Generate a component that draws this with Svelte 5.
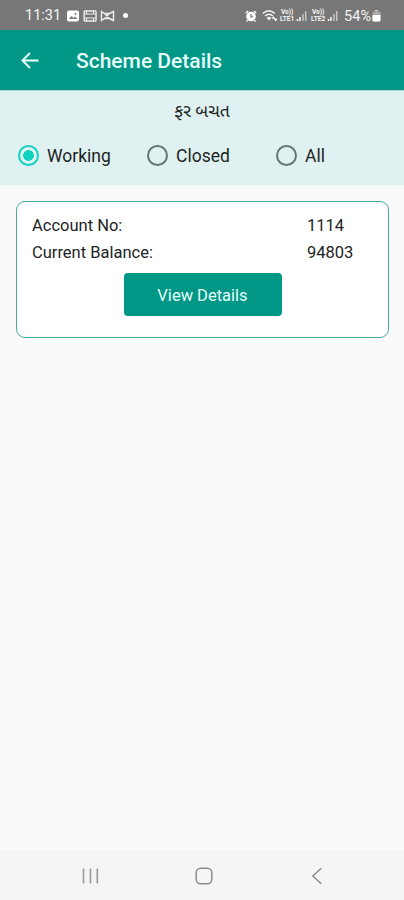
<script lang="ts">
	let filter = $state('working');

	const filters = [
		{ value: 'working', label: 'Working' },
		{ value: 'closed', label: 'Closed' },
		{ value: 'all', label: 'All' }
	];

	const account = { number: '1114', balance: '94803' };
	const sims = [
		{ top: 'Vo))', bottom: 'LTE1' },
		{ top: 'Vo))', bottom: 'LTE2' }
	];
</script>

<div class="screen">
	<div class="status-bar">
		<span class="clock">11:31</span>
		<svg class="notif" width="49" height="12" viewBox="0 0 49 12">
			<rect x="0" y="0.5" width="12" height="11" rx="2" fill="#fff" />
			<path d="M2 9l2.500-3 2 2 1.500-1.500L10.500 9z" fill="#777" />
			<circle cx="8.500" cy="3.700" r="1" fill="#777" />
			<rect x="17.100" y="1" width="12" height="10" rx="1" fill="none" stroke="#eee" stroke-width="1.400" />
			<path d="M19.500 1v3M26.500 1v3M19.500 8v3M26.500 8v3M17.500 4h11.500M17.500 8h11.500" stroke="#eee" fill="none" />
			<path d="M34.500 1.500l3 2h5l4-2v9l-4-2h-5l-3 2zM37.500 3.500l5 5M42.500 3.500l-5 5" stroke="#eee" stroke-width="1.400" fill="none" />
		</svg>
		<span class="dot"></span>

		<div class="status-right">
			<svg class="alarm" width="12" height="12" viewBox="0 0 12 12">
				<circle cx="6" cy="6.500" r="4.800" fill="#fff" />
				<path d="M0.800 3l2.400-2M11.200 3L8.800 1M2.500 10.500l-1 1M9.500 10.500l1 1" stroke="#fff" stroke-width="1.500" />
				<path d="M6 4v3l2-1" stroke="#777" stroke-width="1.200" fill="none" />
			</svg>
			<svg class="wifi" width="16" height="13" viewBox="0 0 16 13">
				<path d="M0.800 4.500q6-5.500 12 0M3 7q4-3.500 8 0M5 9.300q2-1.800 4 0" stroke="#f2f2f2" stroke-width="1.400" fill="none" />
				<path d="M6.900 11.500L5 9.300h3.800zM11.500 7.200l-2 2.500h4zM13.700 12.500l-2-2.700h4z" fill="#fff" />
			</svg>
			{#each sims as sim}
				<span class="lte">
					<span>{sim.top}</span>
					<span>{sim.bottom}</span>
				</span>
				<svg class="signal" width="11" height="11" viewBox="0 0 11 11">
					<path d="M1.500 9v2M4 7v4" stroke="#fff" stroke-width="1.500" />
					<path d="M7 4v7M9.700 1v10" stroke="#c4c4c4" stroke-width="1.500" />
				</svg>
			{/each}
			<span class="percent">54%</span>
			<svg class="battery" width="9" height="12" viewBox="0 0 9 12">
				<path d="M3 0h3v1.500H3z" fill="#ccc" />
				<rect x="0.500" y="1.500" width="8" height="10" rx="1.500" fill="#aaa" />
				<path d="M0.500 5h8v5a1.500 1.500 0 0 1-1.500 1.500H2A1.500 1.500 0 0 1 0.500 10z" fill="#fff" />
			</svg>
		</div>
	</div>

	<header class="app-bar">
		<button class="back-btn" aria-label="Back">
			<svg width="18" height="18" viewBox="0 0 18 18">
				<path d="M17.500 8.500H1.500M9 1L1.500 8.500 9 16" fill="none" stroke="#e6fffb" stroke-width="2" />
			</svg>
		</button>
		<h1>Scheme Details</h1>
	</header>

	<section class="filter-panel">
		<p class="scheme-name">ફર બચત</p>
		<div class="radio-row">
			{#each filters as item}
				<label class="radio">
					<input type="radio" name="filter" value={item.value} bind:group={filter} />
					<span class="ring"></span>
					<span class="radio-label">{item.label}</span>
				</label>
			{/each}
		</div>
	</section>

	<main>
		<div class="card">
			<dl>
				<dt>Account No:</dt>
				<dd>{account.number}</dd>
				<dt>Current Balance:</dt>
				<dd>{account.balance}</dd>
			</dl>
			<button class="details-btn">View Details</button>
		</div>
	</main>

	<nav class="nav-bar">
		<svg width="18" height="18" viewBox="0 0 18 18">
			<path d="M2.500 1.500v15M9.500 1.500v15M16.300 1.500v15" stroke="#999" stroke-width="1.600" />
		</svg>
		<svg width="18" height="18" viewBox="0 0 18 18">
			<rect x="1.200" y="1.200" width="15.600" height="15.600" rx="4.500" fill="none" stroke="#8c8c8c" stroke-width="1.500" />
		</svg>
		<svg width="18" height="18" viewBox="0 0 18 18">
			<path d="M13.300 1.200L4.800 9l8.500 7.800" fill="none" stroke="#8c8c8c" stroke-width="1.500" />
		</svg>
	</nav>
</div>

<style>
	:global(body) {
		margin: 0;
		background: #fafafa;
	}

	.screen {
		width: 404px;
		height: 900px;
		display: flex;
		flex-direction: column;
		overflow: hidden;
		background: #fafafa;
		font-family: Roboto, 'Noto Sans Gujarati', 'Noto Sans', sans-serif;
		color: #1d2424;
	}

	button {
		border: none;
		padding: 0;
		font-family: inherit;
		cursor: pointer;
	}

	svg {
		display: block;
		flex: none;
	}

	/* status bar */
	.status-bar {
		height: 30px;
		flex: none;
		display: flex;
		align-items: center;
		padding: 1px 23px 0 25px;
		box-sizing: border-box;
		background: #777;
		color: #f5f5f5;
	}

	.clock {
		width: 42px;
		font-size: 14.5px;
	}

	.dot {
		width: 5px;
		height: 5px;
		margin-left: 7px;
		border-radius: 50%;
		background: #fff;
	}

	.status-right {
		margin-left: auto;
		display: flex;
		align-items: center;
	}

	.wifi {
		margin: 0 1px 0 5px;
	}

	.lte {
		width: 16px;
		display: flex;
		flex-direction: column;
		align-items: center;
		font-size: 6.5px;
		font-weight: 700;
		line-height: 7px;
	}

	.signal {
		margin: 0 3px 0 1px;
	}

	.percent {
		margin: 1px 1px 0 3px;
		font-size: 14.5px;
	}

	/* app bar */
	.app-bar {
		height: 60px;
		flex: none;
		display: flex;
		align-items: center;
		padding: 2px 21px 0;
		box-sizing: border-box;
		background: #009787;
	}

	.back-btn {
		background: none;
	}

	h1 {
		margin: 0 0 0 37px;
		font-size: 21px;
		font-weight: 500;
		color: #e6fffb;
	}

	/* filters */
	.filter-panel {
		height: 95px;
		flex: none;
		box-sizing: border-box;
		display: flex;
		flex-direction: column;
		padding-top: 9px;
		border-top: 1px solid #a5dcd7;
		background: #dff1f0;
	}

	.scheme-name {
		height: 22px;
		margin: 0 0 23px;
		line-height: 22px;
		font-size: 17.5px;
		text-align: center;
	}

	.radio-row {
		display: grid;
		grid-template-columns: 129px 129px 1fr;
		padding-left: 18px;
	}

	.radio {
		display: flex;
		align-items: center;
		cursor: pointer;
	}

	.radio input {
		display: none;
	}

	.ring {
		width: 21px;
		height: 21px;
		box-sizing: border-box;
		border: 2px solid #667474;
		border-radius: 50%;
	}

	.radio input:checked + .ring {
		border-color: #0fd3c0;
		background: radial-gradient(circle, #0fd3c0 5px, transparent 5.6px);
	}

	.radio-label {
		margin-left: 8px;
		padding-top: 1px;
		font-size: 17.5px;
		line-height: 20px;
	}

	/* account card */
	main {
		flex: 1;
		padding: 16px 15px 0 16px;
	}

	.card {
		height: 137px;
		box-sizing: border-box;
		padding: 10px 15px 0;
		border: 1px solid #45ab9e;
		border-radius: 9px;
		background: #fff;
	}

	dl {
		display: grid;
		grid-template-columns: 275px 1fr;
		margin: 0 0 7px;
		font-size: 16.5px;
		line-height: 27px;
	}

	dd {
		margin: 0;
	}

	.details-btn {
		display: block;
		width: 158px;
		height: 43px;
		margin: 0 auto;
		padding-top: 2px;
		border-radius: 4px;
		background: #009787;
		color: #e6fffb;
		font-size: 16.5px;
	}

	/* system navigation */
	.nav-bar {
		height: 49px;
		flex: none;
		display: flex;
		justify-content: space-between;
		align-items: center;
		padding: 0 78px 0 81px;
		background: #f5f5f5;
	}
</style>
